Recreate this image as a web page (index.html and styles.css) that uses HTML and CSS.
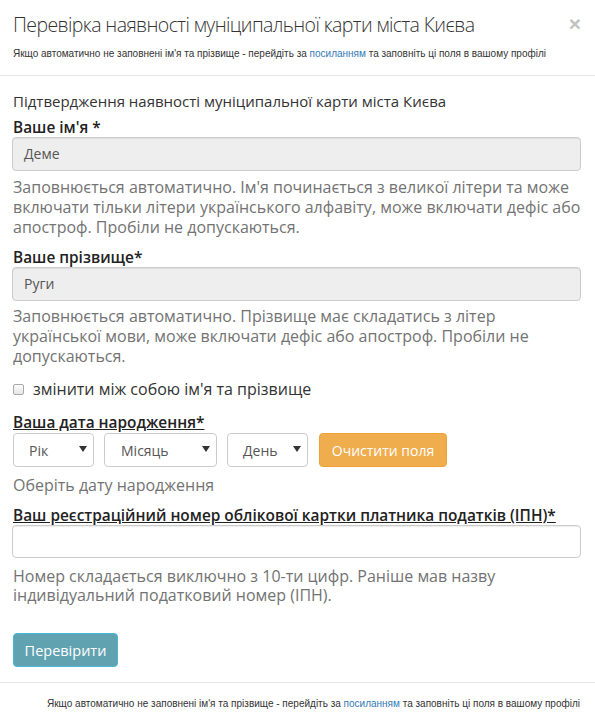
FILE: index.html
```html
<!DOCTYPE html>
<html lang="uk">
<head>
<meta charset="utf-8">
<title>Перевірка наявності муніципальної карти міста Києва</title>
<link rel="stylesheet" href="styles.css">
</head>
<body>
<div class="modal">
  <div class="modal-header">
    <div class="title-row">
      <h4 class="title">Перевірка наявності муніципальної карти міста Києва</h4>
      <span class="close">×</span>
    </div>
    <p class="note">Якщо автоматично не заповнені ім'я та прізвище - перейдіть за <a href="#">посиланням</a> та заповніть ці поля в вашому профілі</p>
  </div>
  <div class="modal-body">
    <p class="intro">Підтвердження наявності муніципальної карти міста Києва</p>

    <label class="lbl lbl-first">Ваше ім'я *</label>
    <div class="input readonly">Деме</div>
    <p class="help">Заповнюється автоматично. Ім'я починається з великої літери та може включати тільки літери українського алфавіту, може включати дефіс або апостроф. Пробіли не допускаються.</p>

    <label class="lbl lbl-second">Ваше прізвище*</label>
    <div class="input readonly">Руги</div>
    <p class="help help-second">Заповнюється автоматично. Прізвище має складатись з літер української мови, може включати дефіс або апостроф. Пробіли не допускаються.</p>

    <label class="check-row"><span class="checkbox"></span><span>змінити між собою ім'я та прізвище</span></label>

    <label class="lbl lbl-date underline">Ваша дата народження*</label>
    <div class="date-row">
      <div class="select sel-year"><span>Рік</span><svg class="caret" width="8" height="6" viewBox="0 0 8 6"><path d="M0 0H8L4 6Z" fill="#333"/></svg></div>
      <div class="select sel-month"><span>Місяць</span><svg class="caret" width="8" height="6" viewBox="0 0 8 6"><path d="M0 0H8L4 6Z" fill="#333"/></svg></div>
      <div class="select sel-day"><span>День</span><svg class="caret" width="8" height="6" viewBox="0 0 8 6"><path d="M0 0H8L4 6Z" fill="#333"/></svg></div>
      <button class="btn btn-warning" type="button">Очистити поля</button>
    </div>
    <p class="help help-date">Оберіть дату народження</p>

    <label class="lbl lbl-ipn underline">Ваш реєстраційний номер облікової картки платника податків (ІПН)*</label>
    <div class="input input-ipn"></div>
    <p class="help help-ipn">Номер складається виключно з 10-ти цифр. Раніше мав назву індивідуальний податковий номер (ІПН).</p>

    <button class="btn btn-check" type="button">Перевірити</button>
  </div>
  <div class="modal-footer">
    <p class="note">Якщо автоматично не заповнені ім'я та прізвище - перейдіть за <a href="#">посиланням</a> та заповніть ці поля в вашому профілі</p>
  </div>
</div>
</body>
</html>
```

FILE: styles.css
```css
html, body {
  margin: 0;
  padding: 0;
  background: #fff;
}
body {
  font-family: "Open Sans", "DejaVu Sans", sans-serif;
  font-size: 16px;
  color: #333;
}
p { margin: 0; }

.modal-header {
  padding: 12px 14px 15px 13px;
  border-bottom: 1px solid #e5e5e5;
}
.title-row {
  display: flex;
  justify-content: space-between;
  align-items: flex-start;
}
.title {
  margin: 0;
  font-size: 19.5px;
  font-weight: 300;
  letter-spacing: -0.6px;
  line-height: 26px;
  color: #333;
  white-space: nowrap;
}
.close {
  font-family: "Liberation Sans", Arial, sans-serif;
  font-size: 21px;
  font-weight: bold;
  line-height: 16px;
  color: #c2c2c2;
  margin-top: 4px;
  margin-right: 0;
}
.note {
  font-family: "Liberation Sans", Arial, sans-serif;
  font-size: 10px;
  line-height: 12px;
  color: #333;
}
.modal-header .note { margin-top: 10px; }
.note a {
  color: #337ab7;
  text-decoration: none;
}

.modal-body {
  padding: 15px 14px 15px 12px;
}
.intro {
  font-size: 15px;
  line-height: 20px;
  padding-left: 1px;
}
.lbl {
  display: block;
  font-size: 15.4px;
  font-weight: 600;
  line-height: 17px;
  padding-left: 1px;
  color: #222;
  margin-bottom: 1px;
}
.lbl-first { margin-top: 8px; }
.lbl-second { margin-top: 12px; }
.lbl-date { margin-top: 15px; margin-bottom: 2px; }
.lbl-ipn { margin-top: 12px; margin-bottom: 1px; }
.underline { text-decoration: underline; text-underline-offset: 1px; }

.input {
  box-sizing: border-box;
  height: 34px;
  border: 1px solid #ccc;
  border-radius: 4px;
  padding: 0 11px;
  font-size: 14px;
  line-height: 32px;
  color: #555;
  background: #fff;
  box-shadow: inset 0 1px 1px rgba(0,0,0,.075);
}
.readonly { background: #eee; }
.input-ipn { height: 33px; }

.help {
  color: #737373;
  line-height: 20px;
  margin-top: 6px;
  padding-left: 1px;
}
.help-second { margin-top: 5px; }
.help-date { margin-top: 8px; }
.help-ipn { margin-top: 9px; line-height: 19px; }

.check-row {
  display: flex;
  align-items: center;
  gap: 9px;
  margin-top: 13px;
  line-height: 20px;
  padding-left: 1px;
}
.checkbox {
  box-sizing: border-box;
  width: 11px;
  height: 11px;
  border: 1px solid #a9a9a9;
  border-radius: 2px;
  background: linear-gradient(#fcfcfc, #e6e6e6);
}

.date-row {
  display: flex;
  align-items: stretch;
  padding-left: 1px;
}
.select {
  box-sizing: border-box;
  height: 34px;
  border: 1px solid #ccc;
  border-radius: 4px;
  background: #fff;
  display: flex;
  align-items: center;
  justify-content: space-between;
  padding: 0 6px 0 15px;
  font-size: 14px;
  color: #555;
  margin-right: 10px;
}
.select .caret { margin-top: -3px; }
.sel-year { width: 81px; }
.sel-month { width: 113px; padding-left: 16px; }
.sel-day { width: 81px; margin-right: 11px; }

.btn {
  box-sizing: border-box;
  height: 34px;
  border-radius: 4px;
  font-family: "Open Sans", "DejaVu Sans", sans-serif;
  color: #fff;
  cursor: pointer;
}
.btn-warning {
  width: 128px;
  font-size: 14px;
  background: #f0ad4e;
  border: 1px solid #eea236;
  padding: 0;
}
.btn-check {
  display: block;
  margin-top: 28px;
  margin-left: 1px;
  width: 105px;
  font-size: 14.5px;
  background: #61a2b1;
  border: 1px solid #46b8da;
  padding: 0;
}

.modal-footer {
  border-top: 1px solid #e5e5e5;
  padding: 15px 15px 10px;
  text-align: right;
}
```
